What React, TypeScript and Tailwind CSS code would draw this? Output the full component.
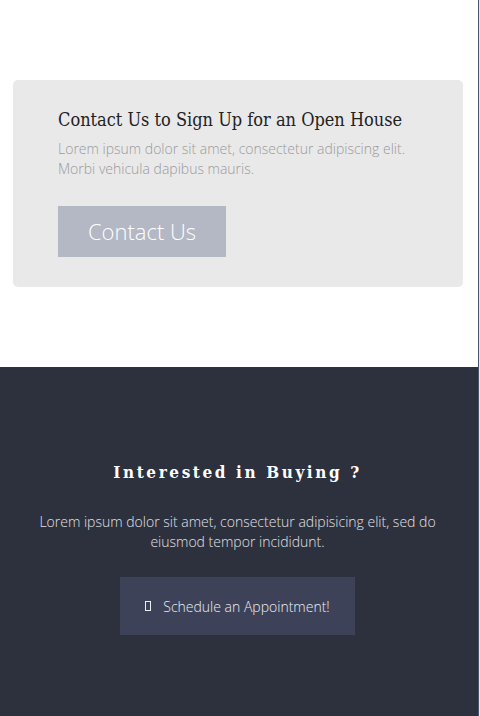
export default function App() {
  return (
    <div className="flex min-h-[716px] w-[480px] overflow-hidden font-['Open_Sans',sans-serif]">
      <div className="flex w-[478px] flex-col">
        {/* Open house card */}
        <section className="bg-white pl-[13px] pr-[15px] py-[80px]">
          <div className="rounded-[5px] bg-[#e9e9ea] px-[45px] pt-[28px] pb-[30px]">
            <h2 className="font-['DejaVu_Serif_Condensed','DejaVu_Serif',serif] text-[18px] leading-[24px] font-stretch-condensed text-[#222]">
              Contact Us to Sign Up for an Open House
            </h2>
            <p className="mt-[7px] text-[14px] font-light leading-[20px] text-[#9a9a9a]">
              Lorem ipsum dolor sit amet, consectetur adipiscing elit. Morbi vehicula dapibus mauris.
            </p>
            <button className="mt-[27px] flex h-[51px] w-[168px] items-center justify-center bg-[#b4b7c4] text-[22px] font-light text-white">
              Contact Us
            </button>
          </div>
        </section>

        {/* Buying CTA */}
        <section className="flex flex-1 flex-col items-center bg-[#2d303d] pl-[27px] pr-[30px] pt-[93px] pb-[80px] text-center">
          <h2 className="font-['DejaVu_Serif_Condensed','DejaVu_Serif',serif] text-[17px] font-bold leading-[24px] font-stretch-condensed tracking-[2.6px] text-white">
            Interested in Buying ?
          </h2>
          <p className="mt-[28px] text-[14px] font-light leading-[20px] text-[#e2e2e6]">
            Lorem ipsum dolor sit amet, consectetur adipisicing elit, sed do eiusmod tempor incididunt.
          </p>
          <button className="mt-[25px] flex h-[58px] w-[235px] items-center justify-center gap-[12px] bg-[#3d4259] text-[14px] font-light text-[#eceef2]">
            <span className="inline-block h-[10px] w-[6px] border border-[#eceef2]" />
            Schedule an Appointment!
          </button>
        </section>
      </div>
      <div className="w-px bg-[#4d5670]" />
      <div className="w-px bg-[#dde8f4]" />
    </div>
  )
}
